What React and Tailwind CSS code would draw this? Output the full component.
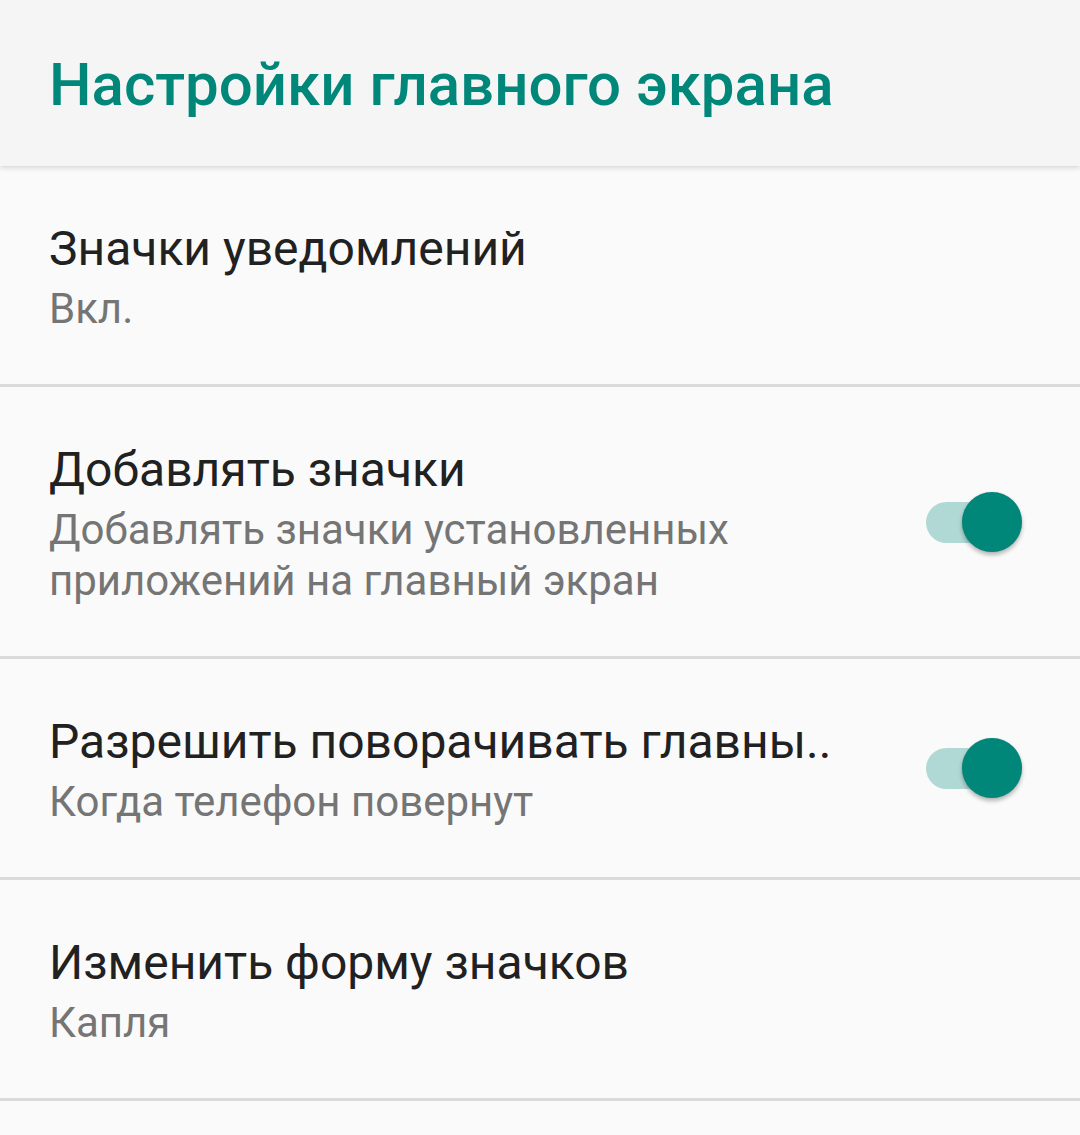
import React from "react";

const font = { fontFamily: "Roboto, 'Noto Sans', sans-serif" };

function Switch() {
  return (
    <div className="relative w-[96px] h-[60px] shrink-0">
      <div className="absolute left-0 top-[10px] w-[84px] h-[41px] rounded-full bg-[#b0d8d4]" />
      <div className="absolute right-0 top-0 w-[60px] h-[60px] rounded-full bg-[#00877a] shadow-[0_3px_4px_rgba(0,0,0,0.28),0_0_1px_rgba(0,0,0,0.2)]" />
    </div>
  );
}

function Row({ title, lines, toggle }) {
  return (
    <div className="flex items-center justify-between pl-[49px] pr-[58px] border-b-[3px] border-[#dadada]">
      <div className="flex flex-col pt-[53px] pb-[50px]">
        <div className="text-[48px] leading-[60px] text-[#212121] whitespace-nowrap">{title}</div>
        <div className="mt-[4px] text-[42px] leading-[51px] text-[#757575]">
          {lines.map((l, i) => (
            <div key={i} className="whitespace-nowrap">{l}</div>
          ))}
        </div>
      </div>
      {toggle && <Switch />}
    </div>
  );
}

export default function App() {
  return (
    <div className="w-[1080px] h-[1135px] bg-[#fafafa] overflow-hidden" style={font}>
      <div className="relative z-10 h-[166px] bg-[#f5f5f5] flex items-center pl-[49px] pt-[3px] shadow-[0_2px_5px_rgba(0,0,0,0.14)]">
        <h1 className="text-[60px] font-medium text-[#00877a] leading-[72px]">Настройки главного экрана</h1>
      </div>
      <Row title="Значки уведомлений" lines={["Вкл."]} />
      <Row
        title="Добавлять значки"
        lines={["Добавлять значки установленных", "приложений на главный экран"]}
        toggle
      />
      <Row title="Разрешить поворачивать главны.." lines={["Когда телефон повернут"]} toggle />
      <Row title="Изменить форму значков" lines={["Капля"]} />
    </div>
  );
}
